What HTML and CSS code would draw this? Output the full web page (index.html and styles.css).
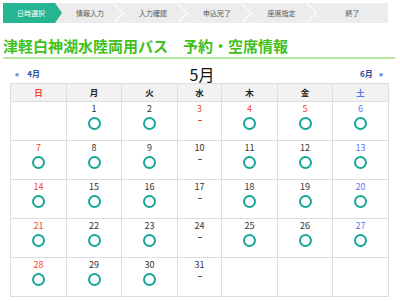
FILE: index.html
```html
<!DOCTYPE html>
<html lang="ja">
<head>
<meta charset="utf-8">
<link rel="stylesheet" href="styles.css">
</head>
<body>
<ol class="steps">
  <li class="step step-active">日時選択</li>
  <li class="step s2">情報入力</li>
  <li class="step s3">入力確認</li>
  <li class="step s4">申込完了</li>
  <li class="step s5">座席指定</li>
  <li class="step s6 step-last">終了</li>
</ol>
<h1 class="title">津軽白神湖水陸両用バス　予約・空席情報</h1>
<div class="month-nav">
  <a class="nav-link"><span class="arrow-l">«</span>4月</a>
  <span class="month">5月</span>
  <a class="nav-link nav-next">6月<span class="arrow-r">»</span></a>
</div>
<table class="cal">
  <colgroup>
    <col class="c56"><col class="c55"><col class="c56"><col class="c44"><col class="c56"><col class="c55"><col class="c56">
  </colgroup>
  <thead>
    <tr><th class="sun">日</th><th>月</th><th>火</th><th>水</th><th>木</th><th>金</th><th class="sat">土</th></tr>
  </thead>
  <tbody>
    <tr>
      <td></td>
      <td><div class="num">1</div><div class="ok"></div></td>
      <td><div class="num">2</div><div class="ok"></div></td>
      <td><div class="num sun">3</div><div class="na red"></div></td>
      <td><div class="num sun">4</div><div class="ok"></div></td>
      <td><div class="num sun">5</div><div class="ok"></div></td>
      <td><div class="num sat">6</div><div class="ok"></div></td>
    </tr>
    <tr>
      <td><div class="num sun">7</div><div class="ok"></div></td>
      <td><div class="num">8</div><div class="ok"></div></td>
      <td><div class="num">9</div><div class="ok"></div></td>
      <td><div class="num">10</div><div class="na"></div></td>
      <td><div class="num">11</div><div class="ok"></div></td>
      <td><div class="num">12</div><div class="ok"></div></td>
      <td><div class="num sat">13</div><div class="ok"></div></td>
    </tr>
    <tr>
      <td><div class="num sun">14</div><div class="ok"></div></td>
      <td><div class="num">15</div><div class="ok"></div></td>
      <td><div class="num">16</div><div class="ok"></div></td>
      <td><div class="num">17</div><div class="na"></div></td>
      <td><div class="num">18</div><div class="ok"></div></td>
      <td><div class="num">19</div><div class="ok"></div></td>
      <td><div class="num sat">20</div><div class="ok"></div></td>
    </tr>
    <tr>
      <td><div class="num sun">21</div><div class="ok"></div></td>
      <td><div class="num">22</div><div class="ok"></div></td>
      <td><div class="num">23</div><div class="ok"></div></td>
      <td><div class="num">24</div><div class="na"></div></td>
      <td><div class="num">25</div><div class="ok"></div></td>
      <td><div class="num">26</div><div class="ok"></div></td>
      <td><div class="num sat">27</div><div class="ok"></div></td>
    </tr>
    <tr>
      <td><div class="num sun">28</div><div class="ok"></div></td>
      <td><div class="num">29</div><div class="ok"></div></td>
      <td><div class="num">30</div><div class="ok"></div></td>
      <td><div class="num">31</div><div class="na"></div></td>
      <td></td>
      <td></td>
      <td></td>
    </tr>
  </tbody>
</table>
</body>
</html>
```
FILE: styles.css
```css
* { box-sizing: border-box; }
html, body { margin: 0; padding: 0; background: #fff; }
body {
  font-family: "Noto Sans CJK JP", "Noto Sans", sans-serif;
  color: #333;
  width: 400px;
  height: 301px;
  overflow: hidden;
}
.steps {
  list-style: none;
  margin: 3px 12px 0 3px;
  padding: 0;
  height: 20px;
  display: flex;
  background: #ececec;
}
.step {
  position: relative;
  height: 20px;
  line-height: 20px;
  font-size: 7px;
  color: #555;
  text-align: center;
  padding-right: 6px;
}
.step::after {
  content: "";
  position: absolute;
  right: 3px;
  top: 3px;
  width: 13px;
  height: 13px;
  border-top: 1px solid #fff;
  border-right: 1px solid #fff;
  transform: rotate(45deg);
}
.step-active {
  width: 59px;
  color: #fff;
  background: #26b592;
  padding-right: 3px;
  clip-path: polygon(0 0, calc(100% - 7px) 0, 100% 50%, calc(100% - 7px) 100%, 0 100%);
}
.step-active::after, .step-last::after { display: none; }
.s2 { width: 62px; }
.s3 { width: 64px; }
.s4 { width: 64px; }
.s5 { width: 65px; }
.s6 { flex: 1; padding-right: 0; }
.title {
  margin: 11px 5px 0 3px;
  padding: 0;
  height: 25px;
  line-height: 23px;
  font-size: 15px;
  font-weight: bold;
  color: #3fc11a;
  border-bottom: 2px solid #b6e8a0;
  white-space: nowrap;
}
.month-nav {
  height: 24px;
  display: flex;
  align-items: flex-end;
  justify-content: space-between;
  margin: 0 17px 0 15px;
}
.nav-link {
  font-size: 8px;
  font-weight: bold;
  line-height: 10px;
  margin-bottom: 4px;
  color: #2b4a9c;
  width: 40px;
}
.nav-next { text-align: right; }
.arrow-l { margin-right: 8px; }
.arrow-r { margin-left: 6px; }
.month {
  font-size: 16px;
  line-height: 18px;
  color: #111;
  margin-left: 6px;
}
.cal {
  margin-left: 10px;
  width: 378px;
  table-layout: fixed;
  border-collapse: collapse;
}
.c56 { width: 56px; }
.c55 { width: 55px; }
.c44 { width: 44px; }
.cal th, .cal td {
  border: 1px solid #dedede;
  padding: 0;
  text-align: center;
  vertical-align: top;
}
.cal th {
  height: 18px;
  line-height: 16px;
  font-size: 8.5px;
  font-weight: bold;
  background: #f2f2f2;
  color: #222;
}
.cal td { height: 39px; }
.cal th.sun, .num.sun { color: #f2442b; }
.cal th.sat, .num.sat { color: #5a78ee; }
.num {
  font-size: 9px;
  line-height: 11px;
  padding-top: 1px;
  height: 12px;
  color: #333;
}
.ok {
  width: 13px;
  height: 13px;
  margin: 3px auto 0;
  border: 2.3px solid #15a899;
  border-radius: 50%;
}
.na {
  width: 4px;
  height: 1px;
  margin: 6px auto 0;
  background: #555;
}
.na.red { background: #f2442b; }
```
